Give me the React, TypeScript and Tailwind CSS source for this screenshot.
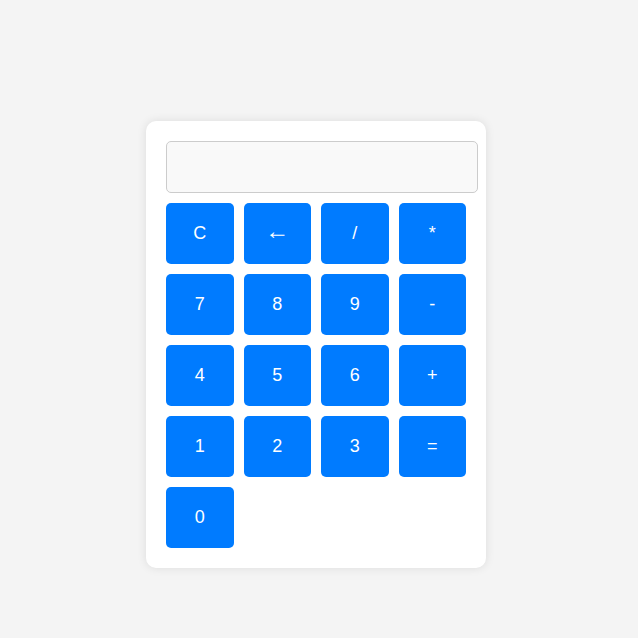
export default function App() {
  const keys = ["C", "←", "/", "*", "7", "8", "9", "-", "4", "5", "6", "+", "1", "2", "3", "=", "0"];
  return (
    <div className="min-h-[638px] w-full bg-[#f4f4f4] pt-[121px] pl-[146px]" style={{ fontFamily: '"Liberation Sans", Arial, sans-serif' }}>
      <div className="w-[340px] rounded-[10px] bg-white p-[20px] shadow-[0_0_10px_rgba(0,0,0,0.1)]">
        <div className="mb-[10px] h-[52px] w-[312px] rounded-[5px] border border-[#cccccc] bg-[#f9f9f9]" />
        <div className="grid w-[300px] grid-cols-4 gap-[10px]">
          {keys.map((k) => (
            <button
              key={k}
              className="flex h-[61px] items-center justify-center rounded-[5px] bg-[#007bff] text-[18px] text-white"
            >
              {k === "←" ? <span className="-translate-y-[3px] text-[24px] leading-none">←</span> : k}
            </button>
          ))}
        </div>
      </div>
    </div>
  );
}
